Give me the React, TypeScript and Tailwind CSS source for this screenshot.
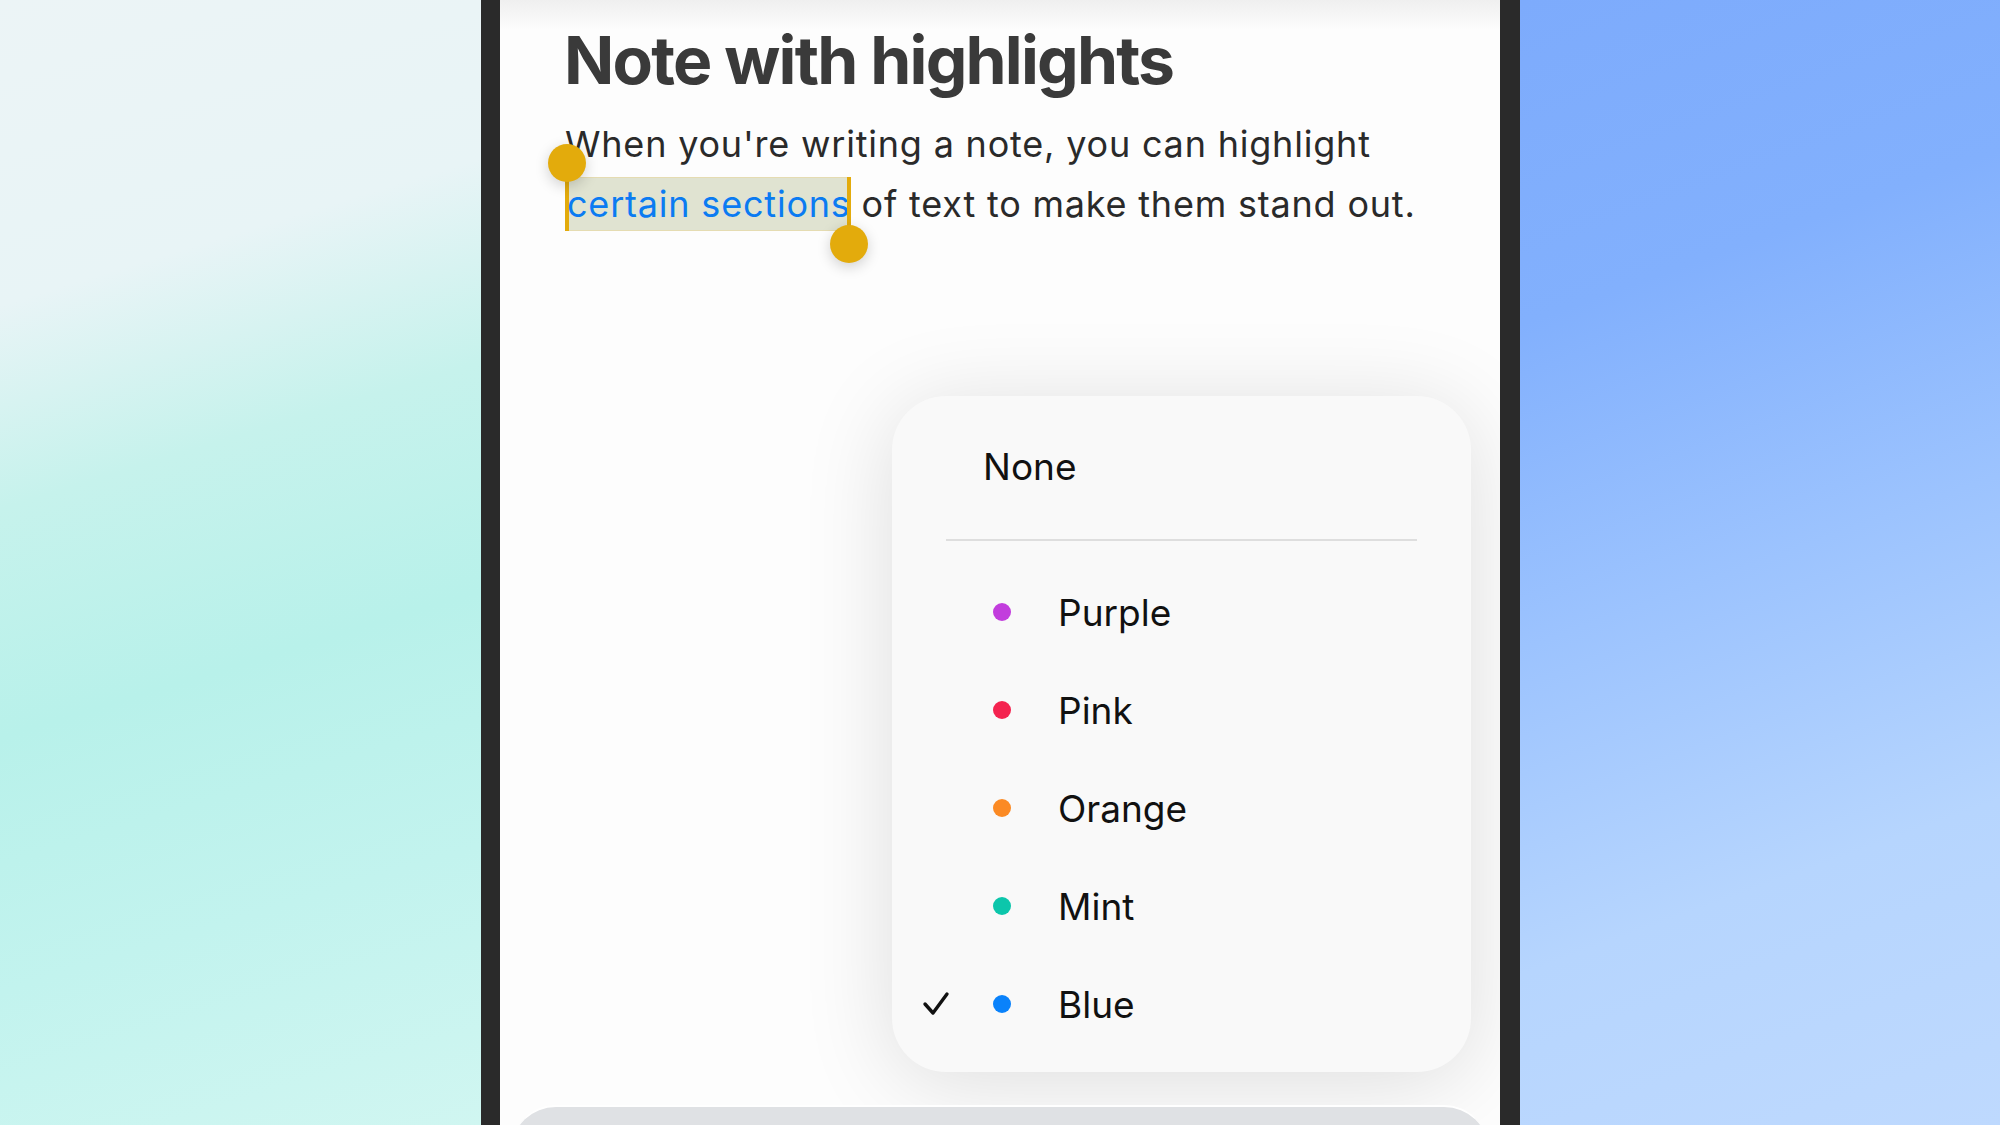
const swatches = [
  { name: "Purple", dot: "bg-[#c23ddd]" },
  { name: "Pink", dot: "bg-[#f4234f]" },
  { name: "Orange", dot: "bg-[#fb8a24]" },
  { name: "Mint", dot: "bg-[#0cc6ab]" },
  { name: "Blue", dot: "bg-[#0a82fb]", selected: true },
];

function Check() {
  return (
    <svg width="29" height="26" viewBox="0 0 29 26" fill="none">
      <polyline
        points="4,13 12,22 26,3"
        stroke="#111111"
        strokeWidth="3.4"
        strokeLinecap="round"
        strokeLinejoin="round"
      />
    </svg>
  );
}

export default function App() {
  return (
    <div className="flex h-[1125px] w-[2000px] overflow-hidden font-['Inter',sans-serif]">
      {/* left backdrop */}
      <div className="w-[481px] shrink-0 bg-[linear-gradient(163deg,#ecf4f6_0%,#e8f4f6_24%,#c6f2ec_40%,#b8f1ea_58%,#c2f3ee_78%,#d0f6f1_100%)]" />

      {/* phone */}
      <div className="relative flex w-[1039px] shrink-0 flex-col overflow-hidden border-l-[19px] border-r-[20px] border-[#2a2a2a] bg-[#fdfdfd]">
        <div className="pointer-events-none absolute inset-x-0 top-0 h-[30px] bg-gradient-to-b from-[#efefef] to-transparent" />

        <h1 className="mt-[20px] pl-[64px] text-[66px] font-bold leading-[80px] tracking-[-1.8px] text-[#3a3a3a]">
          Note with highlights
        </h1>

        <p className="mt-[14px] pl-[65px] text-[36px] leading-[60px] tracking-[0.8px] text-[#2a2a2a]">
          When you're writing a note, you can highlight
          <br />
          <span className="relative bg-[#e0e3d1] py-[5px] pl-[2px] text-[#0b7bf2] shadow-[inset_0_0_0_1px_rgba(238,205,120,0.35)]">
            certain sections
            {/* start handle */}
            <span className="absolute left-0 top-[-14px] bottom-0 w-[4px] bg-[#e3ab0c]" />
            <span className="absolute left-[-17px] top-[-33px] h-[38px] w-[38px] rounded-full bg-[#e3ab0c] shadow-[0_4px_14px_rgba(0,0,0,0.18)]" />
            {/* end handle */}
            <span className="absolute right-0 top-0 bottom-[-13px] w-[4px] bg-[#e3ab0c]" />
            <span className="absolute right-[-17px] bottom-[-32px] h-[38px] w-[38px] rounded-full bg-[#e3ab0c] shadow-[0_4px_14px_rgba(0,0,0,0.18)]" />
          </span>{" "}
          of text to make them stand out.
        </p>

        {/* highlight colour menu */}
        <div className="mr-[29px] mt-[162px] w-[579px] self-end rounded-[54px] bg-[#f9f9f9] pb-[19px] pt-[22px] shadow-[0_10px_90px_rgba(0,0,0,0.13)]">
          <div className="flex h-[97px] items-center pl-[91px] text-[37px] leading-none text-[#111111]">
            None
          </div>
          <div className="mx-[54px] mt-[24px] h-[2px] bg-[#dedede]" />
          <div className="mt-[22px] flex flex-col">
            {swatches.map((s) => (
              <div
                key={s.name}
                className="flex h-[98px] items-center pl-[29px] text-[37px] leading-none text-[#111111]"
              >
                <div className="flex w-[72px] items-center">
                  {s.selected && <Check />}
                </div>
                <span className={`h-[18px] w-[18px] rounded-full ${s.dot}`} />
                <span className="ml-[47px]">{s.name}</span>
              </div>
            ))}
          </div>
        </div>

        {/* next sheet peeking from the bottom */}
        <div className="mx-[12px] mt-[33px] h-[80px] shrink-0 rounded-t-[44px] border-t-2 border-white bg-[#dfe1e4]" />
      </div>

      {/* right backdrop */}
      <div className="flex-1 bg-[linear-gradient(160deg,#7dabfc_0%,#82b0fd_25%,#9cc3fe_50%,#b6d5fe_75%,#bed9fe_100%)]" />
    </div>
  );
}
